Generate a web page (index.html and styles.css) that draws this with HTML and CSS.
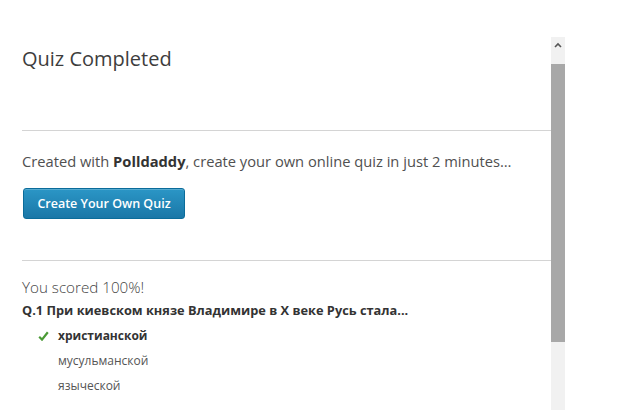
FILE: index.html
```html
<!DOCTYPE html>
<html>
<head>
<meta charset="utf-8">
<link rel="stylesheet" href="styles.css">
</head>
<body>
<div class="frame">
  <div class="content">
    <h1 class="title">Quiz Completed</h1>
    <hr class="rule rule-top">
    <p class="promo">Created with <b>Polldaddy</b>, create your own online quiz in just 2 minutes…</p>
    <a class="btn">Create Your Own Quiz</a>
    <hr class="rule rule-bottom">
    <div class="score">You scored 100%!</div>
    <div class="question">Q.1 При киевском князе Владимире в X веке Русь стала...</div>
    <ul class="answers">
      <li class="answer correct"><svg class="check" width="11" height="10" viewBox="0 0 11 10"><path d="M1.2 5.8 L4 8.6 L9.8 1.2" fill="none" stroke="#4a9a35" stroke-width="2.2"/></svg>христианской</li>
      <li class="answer">мусульманской</li>
      <li class="answer">языческой</li>
    </ul>
  </div>
  <div class="scrollbar">
    <div class="sb-up"><svg width="8" height="6" viewBox="0 0 8 6"><path d="M1 5 L4 2 L7 5" fill="none" stroke="#555" stroke-width="1.6"/></svg></div>
    <div class="sb-thumb"></div>
    <div class="sb-track"></div>
  </div>
</div>
</body>
</html>
```
FILE: styles.css
```css
html, body {
  margin: 0;
  padding: 0;
  background: #fff;
  overflow: hidden;
}
body {
  font-family: "Open Sans", "Liberation Sans", sans-serif;
  color: #444;
}
.frame {
  display: flex;
  padding-top: 37px;
  width: 565px;
  height: 373px;
}
.content {
  flex: 1;
  padding-left: 22px;
}
.title {
  margin: 8px 0 0;
  font-size: 20px;
  font-weight: 400;
  color: #3d3d3d;
  line-height: 27px;
}
.rule {
  border: 0;
  height: 1px;
  background: #d4d4d4;
  margin: 0;
}
.rule-top {
  margin-top: 58px;
}
.promo {
  margin: 21px 0 0;
  font-size: 14.7px;
  line-height: 19px;
  color: #505050;
}
.promo b {
  font-weight: 700;
  color: #333;
}
.btn {
  display: flex;
  align-items: center;
  justify-content: center;
  box-sizing: border-box;
  margin: 17px 0 0 1px;
  width: 162px;
  height: 31px;
  border: 1px solid #0b6c9a;
  border-radius: 3px;
  background: linear-gradient(#2b96c6, #1a77a7);
  color: #fff;
  font-size: 12.5px;
  font-weight: 600;
  box-shadow: inset 0 1px 0 rgba(255,255,255,0.2);
}
.rule-bottom {
  margin-top: 41px;
}
.score {
  margin-top: 15px;
  font-size: 15.2px;
  font-weight: 300;
  line-height: 22px;
  color: #444;
}
.question {
  margin-top: 3px;
  font-size: 12.8px;
  font-weight: 700;
  line-height: 18px;
  color: #333;
}
.answers {
  list-style: none;
  margin: 4px 0 0;
  padding: 0 0 0 36px;
}
.answer {
  position: relative;
  font-size: 12px;
  line-height: 25px;
  color: #555;
}
.answer.correct {
  font-weight: 700;
  color: #333;
}
.check {
  position: absolute;
  left: -20px;
  top: 8px;
}
.scrollbar {
  width: 14px;
  display: flex;
  flex-direction: column;
}
.sb-up {
  height: 27px;
  background: #f1f1f1;
  display: flex;
  justify-content: center;
  padding-top: 5px;
  box-sizing: border-box;
}
.sb-thumb {
  height: 278px;
  background: #a8a8a8;
}
.sb-track {
  flex: 1;
  background: #f1f1f1;
}
```
